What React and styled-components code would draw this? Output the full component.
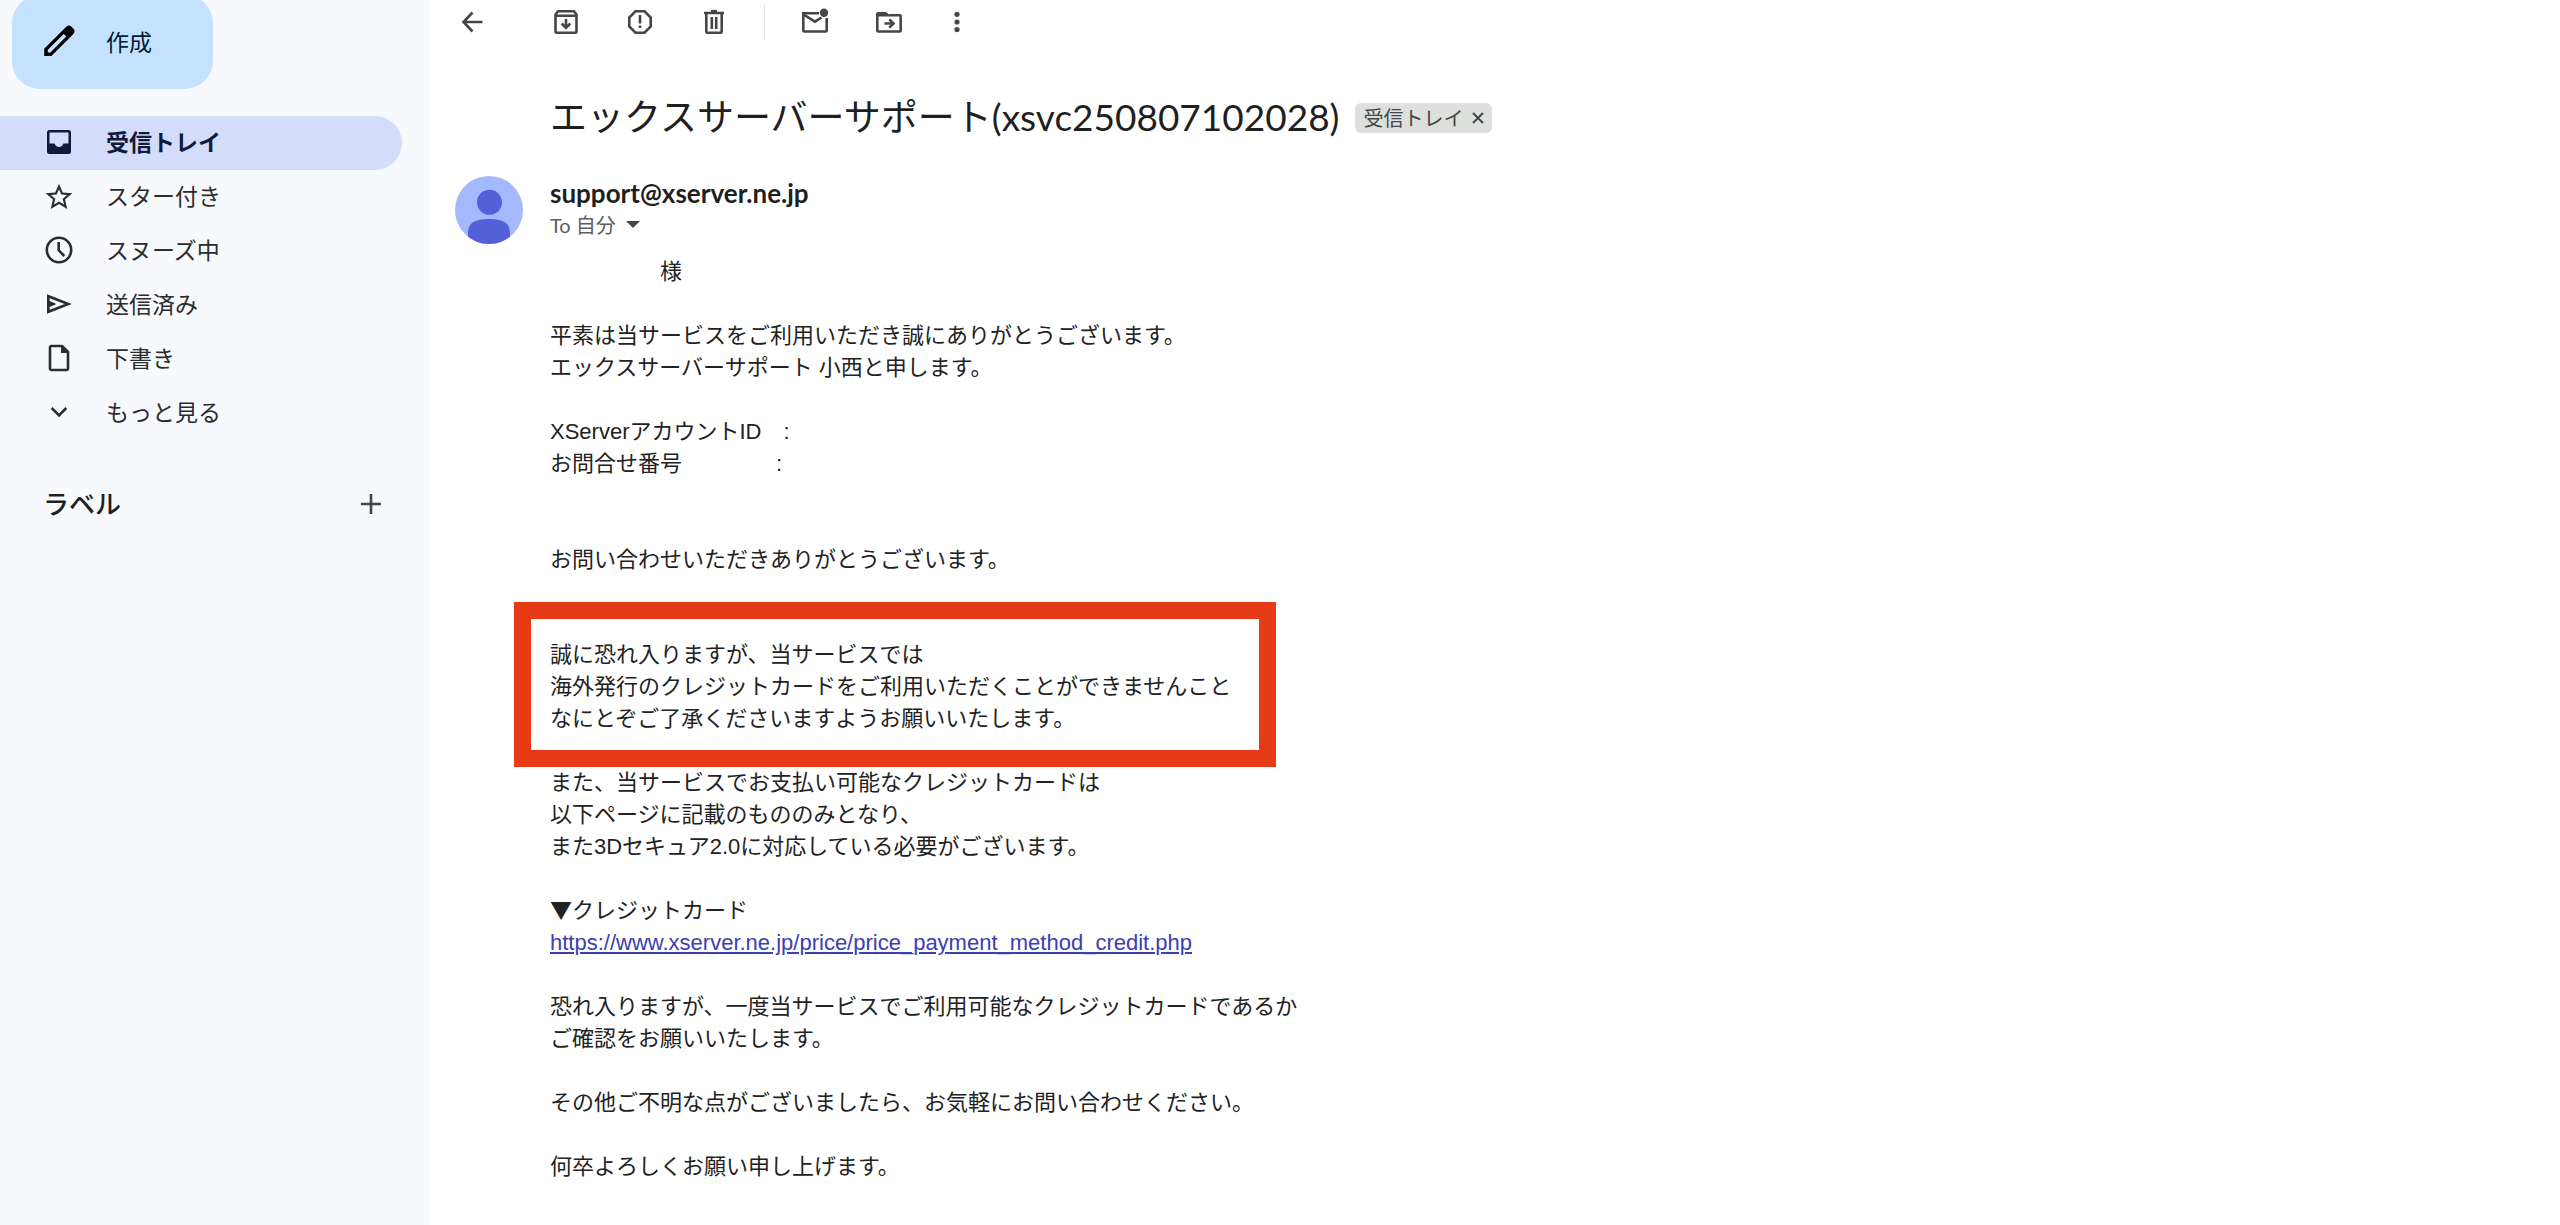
import React from "react";
import styled, { createGlobalStyle } from "styled-components";

const ui = `Lato, "Noto Sans CJK JP", sans-serif`;
const mail = `"Liberation Sans", "Noto Sans CJK JP", sans-serif`;

const GlobalStyle = createGlobalStyle`
  *, *::before, *::after { box-sizing: border-box; }
  body { margin: 0; background: #fff; color: #1f1f1f; font-family: ${ui}; }
  button { border: 0; padding: 0; background: none; color: inherit; font: inherit; cursor: pointer; }
  svg { display: block; flex: none; }
`;

const Layout = styled.div`
  display: flex;
  min-height: 100vh;
`;

const Sidebar = styled.aside`
  flex: none;
  width: 429px;
  background: #f8f9fd;
`;

const Compose = styled.button`
  display: flex;
  align-items: center;
  gap: 31px;
  width: 201px;
  height: 94px;
  margin: -5px 0 27px 12px;
  padding: 0 0 2px 31px;
  border-radius: 28px;
  background: #c4e2ff;
  color: #001d35;
  font-size: 23px;
`;

const NavItem = styled.a`
  display: flex;
  align-items: center;
  gap: 31px;
  width: 402px;
  height: 54px;
  padding: 0 0 2px 43px;
  border-radius: 0 27px 27px 0;
  background: ${(p) => (p.$active ? "#d3dcf9" : "transparent")};
  color: ${(p) => (p.$active ? "#0f1a3d" : "#2b2c2e")};
  font-size: 23px;
  line-height: 32px;
  font-weight: ${(p) => (p.$active ? 700 : 400)};
  text-decoration: none;
`;

const Labels = styled.div`
  display: flex;
  align-items: center;
  justify-content: space-between;
  width: 402px;
  margin-top: 46px;
  padding: 0 15px 0 43px;
`;

const LabelsTitle = styled.h2`
  margin: 0;
  font-size: 26px;
  line-height: 36px;
  font-weight: 500;
`;

const IconButton = styled.button`
  display: flex;
  justify-content: center;
  width: ${(p) => p.$width || 32}px;
  height: 32px;
  color: #444746;
`;

const Main = styled.main`
  flex: 1;
  min-width: 0;
  padding: 6px 26px 24px;
`;

const Toolbar = styled.div`
  display: flex;
  align-items: center;
  gap: 42px;
  height: 32px;
  padding-left: 1px;
`;

const ToolGroup = styled.div`
  display: flex;
  gap: 42px;
  padding-left: ${(p) => p.$indent || 0}px;
`;

const Divider = styled.span`
  width: 1px;
  height: 36px;
  margin: 0 -8px;
  background: #e3e5e8;
`;

const Subject = styled.div`
  display: flex;
  align-items: center;
  gap: 16px;
  margin-top: 55px;
  padding-left: 95px;
`;

const Title = styled.h1`
  margin: 0;
  font-size: 37px;
  line-height: 48px;
  font-weight: 400;
`;

const Chip = styled.span`
  display: flex;
  align-items: center;
  gap: 5px;
  height: 30px;
  margin-top: 2px;
  padding: 0 4px 0 8px;
  border-radius: 6px;
  background: #dde0dd;
  color: #444746;
  font-size: 20px;
  line-height: 30px;
`;

const ChipClose = styled.button`
  display: flex;
  align-items: center;
  justify-content: center;
  width: 20px;
  height: 30px;
`;

const Sender = styled.header`
  display: flex;
  gap: 27px;
  margin-top: 35px;
`;

const SenderText = styled.div`
  padding-top: 1px;
`;

const Address = styled.div`
  font-size: 26px;
  line-height: 32px;
  font-weight: 700;
`;

const Recipient = styled.button`
  display: flex;
  align-items: center;
  gap: 10px;
  color: #5e5e5e;
  font-size: 20px;
  line-height: 32px;
`;

const Body = styled.div`
  margin-top: 12px;
  padding-left: 95px;
  color: #222;
  font-family: ${mail};
  font-size: 22px;
  line-height: 32px;
`;

const Paragraph = styled.p`
  margin: 0 0 ${(p) => (p.$gap ?? 1) * 32}px;
  white-space: pre-line;
`;

const Field = styled.div`
  white-space: pre;
`;

const Bullet = styled.span`
  font-family: "Noto Sans CJK JP", sans-serif;
  line-height: 1;
`;

const Highlight = styled.section`
  width: 762px;
  margin: -6px 0 0 -36px;
  padding: 20px 19px 15px;
  border: 17px solid #e73b17;
`;

const Link = styled.a`
  color: #3b40b0;
`;

const stroke = {
  fill: "none",
  stroke: "currentColor",
  strokeWidth: 2.6,
};

const Icon = ({ size = 32, children }) => (
  <svg width={size} height={size} viewBox="0 0 32 32" {...stroke} aria-hidden="true">
    {children}
  </svg>
);

const PencilIcon = () => (
  <Icon>
    <path
      d="M1.200 31 L1.200 23.800 L22.500 2.500 Q25.500 -.800 28.500 1.700 L30.500 3.700 Q33 6.700 29.700 9.700 L8.400 31 Z M4.800 27.400 L7.400 27.400 L23.300 11.500 L20.700 8.900 L4.800 24.800 Z"
      fill="#000"
      fillRule="evenodd"
      stroke="none"
    />
  </Icon>
);

const InboxIcon = () => (
  <Icon>
    <path
      d="M6.500 4h19A2.500 2.500 0 0 1 28 6.500v19A2.500 2.500 0 0 1 25.500 28h-19A2.500 2.500 0 0 1 4 25.500v-19A2.500 2.500 0 0 1 6.500 4zM6.500 6.500V17.500H11.500Q13 21 16 21Q19 21 20.500 17.500H25.500V6.500z"
      fill="currentColor"
      fillRule="evenodd"
      stroke="none"
    />
  </Icon>
);

const StarIcon = () => (
  <Icon>
    <g transform="translate(0 1) scale(1.333)">
      <path
        d="M22 9.240l-7.190-.620L12 2 9.190 8.630 2 9.240l5.460 4.730L5.820 21 12 17.270 18.180 21l-1.630-7.030L22 9.240zM12 15.400l-3.760 2.270 1-4.280-3.320-2.880 4.380-.380L12 6.100l1.710 4.040 4.380.380-3.320 2.880 1 4.280L12 15.400z"
        fill="currentColor"
        stroke="none"
      />
    </g>
  </Icon>
);

const ClockIcon = () => (
  <Icon>
    <circle cx="16" cy="16" r="12.200" />
    <path d="M15.700 8v8.300l5.600 5.700" />
  </Icon>
);

const SendIcon = () => (
  <Icon>
    <path d="M5.300 8.200v15.600L25.300 16z" />
    <path d="M5 12.300v7.400L13.500 16z" fill="currentColor" stroke="none" />
  </Icon>
);

const DraftIcon = () => (
  <Icon>
    <path d="M19 4H8.500A1.500 1.500 0 0 0 7 5.500v21A1.500 1.500 0 0 0 8.500 28h15a1.500 1.500 0 0 0 1.500-1.500V10z" strokeLinejoin="round" />
    <path d="M18 3.500V11h7.500z" fill="currentColor" stroke="none" />
  </Icon>
);

const ChevronIcon = () => (
  <Icon>
    <path d="M8.700 12l7.300 7.300L23.300 12" />
  </Icon>
);

const PlusIcon = () => (
  <Icon>
    <path d="M16 6v20M6 16h20" />
  </Icon>
);

const BackIcon = () => (
  <Icon>
    <path d="M26.500 16H8M16.500 6.500L7.500 16l9 9.500" />
  </Icon>
);

const ArchiveIcon = () => (
  <Icon>
    <path d="M5.500 8.500L8 5.300h16l2.500 3.200v17a1.200 1.200 0 0 1-1.200 1.200H6.700a1.200 1.200 0 0 1-1.200-1.200zM5 9.800h22" strokeLinejoin="round" />
    <path d="M16 13v8.500M11.700 17.500l4.300 4.300 4.300-4.300" />
  </Icon>
);

const SpamIcon = () => (
  <Icon>
    <path d="M11.500 5.300h9l6.200 6.200v9l-6.200 6.200h-9l-6.200-6.200v-9z" />
    <path d="M16 9v8.500M16 19.500v2.600" />
  </Icon>
);

const TrashIcon = () => (
  <Icon>
    <path d="M6 7h20M8.300 7v18.500a1.200 1.200 0 0 0 1.200 1.200h13a1.200 1.200 0 0 0 1.200-1.200V7M13.800 11v12M18.200 11v12" />
    <path d="M13 5.200h6" />
  </Icon>
);

const UnreadIcon = () => (
  <Icon>
    <path d="M20 7.300H4.300v17.200a1 1 0 0 0 1 1h21.400a1 1 0 0 0 1-1V12" />
    <path d="M4.500 8.500L16 15.700l6.500-4.200" />
    <circle cx="25" cy="6.700" r="4.200" fill="currentColor" stroke="none" />
  </Icon>
);

const MoveIcon = () => (
  <Icon>
    <path d="M4.300 8v16.500a1 1 0 0 0 1 1h21.400a1 1 0 0 0 1-1V10.300a1 1 0 0 0-1-1H16" />
    <path d="M3 10.600V8a2 2 0 0 1 2-2h8l3.500 3v1.600z" fill="currentColor" stroke="none" />
    <path d="M11.500 17.500h8M16.300 13.300l4.200 4.200-4.200 4.200" />
  </Icon>
);

const MoreIcon = () => (
  <Icon>
    <g fill="currentColor" stroke="none">
      <circle cx="16" cy="8.300" r="2.600" />
      <circle cx="16" cy="16" r="2.600" />
      <circle cx="16" cy="23.600" r="2.600" />
    </g>
  </Icon>
);

const Avatar = () => (
  <svg width="68" height="68" viewBox="0 0 68 68" role="img" aria-label="support@xserver.ne.jp">
    <clipPath id="avatar-clip">
      <circle cx="34" cy="34" r="34" />
    </clipPath>
    <g clipPath="url(#avatar-clip)">
      <rect width="68" height="68" fill="#a3b8fd" />
      <circle cx="34.500" cy="26.300" r="12.500" fill="#5460d8" />
      <path d="M13 68V56Q13 43 34 43T55 56V68z" fill="#5460d8" />
    </g>
  </svg>
);

const navItems = [
  { label: "受信トレイ", icon: InboxIcon, active: true },
  { label: "スター付き", icon: StarIcon },
  { label: "スヌーズ中", icon: ClockIcon },
  { label: "送信済み", icon: SendIcon },
  { label: "下書き", icon: DraftIcon },
  { label: "もっと見る", icon: ChevronIcon },
];

const Tool = ({ label, icon: Glyph, width }) => (
  <IconButton aria-label={label} $width={width}>
    <Glyph />
  </IconButton>
);

export default function App() {
  return (
    <>
      <GlobalStyle />
      <Layout>
        <Sidebar>
          <Compose>
            <PencilIcon />
            作成
          </Compose>
          <nav>
            {navItems.map(({ label, icon: Glyph, active }) => (
              <NavItem key={label} href="#" $active={active}>
                <Glyph />
                {label}
              </NavItem>
            ))}
          </nav>
          <Labels>
            <LabelsTitle>ラベル</LabelsTitle>
            <Tool label="新しいラベルを作成" icon={PlusIcon} />
          </Labels>
        </Sidebar>
        <Main>
          <Toolbar>
            <ToolGroup>
              <Tool label="戻る" icon={BackIcon} />
            </ToolGroup>
            <ToolGroup $indent={20}>
              <Tool label="アーカイブ" icon={ArchiveIcon} />
              <Tool label="迷惑メールを報告" icon={SpamIcon} />
              <Tool label="削除" icon={TrashIcon} />
            </ToolGroup>
            <Divider />
            <ToolGroup>
              <Tool label="未読にする" icon={UnreadIcon} />
              <Tool label="移動" icon={MoveIcon} />
              <Tool label="その他" icon={MoreIcon} width={20} />
            </ToolGroup>
          </Toolbar>
          <Subject>
            <Title>エックスサーバーサポート(xsvc250807102028)</Title>
            <Chip>
              受信トレイ
              <ChipClose aria-label="受信トレイから削除">
                <svg width="12" height="12" viewBox="0 0 12 12" {...stroke} strokeWidth="2">
                  <path d="M1 1l10 10M11 1L1 11" />
                </svg>
              </ChipClose>
            </Chip>
          </Subject>
          <Sender>
            <Avatar />
            <SenderText>
              <Address>support@xserver.ne.jp</Address>
              <Recipient>
                To 自分
                <svg width="14" height="8" viewBox="0 0 14 8">
                  <path d="M0 0h14L7 7z" fill="#444746" />
                </svg>
              </Recipient>
            </SenderText>
          </Sender>
          <Body>
            <Field>{"　　　　　様"}</Field>
            <Paragraph $gap={1}> </Paragraph>
            <Paragraph>
              {"平素は当サービスをご利用いただき誠にありがとうございます。\nエックスサーバーサポート 小西と申します。"}
            </Paragraph>
            <Field>{"XServerアカウントID　:"}</Field>
            <Field>{"お問合せ番号　　　　 :"}</Field>
            <Paragraph $gap={2}> </Paragraph>
            <Paragraph>お問い合わせいただきありがとうございます。</Paragraph>
            <Highlight>
              <Paragraph $gap={0}>
                {"誠に恐れ入りますが、当サービスでは\n海外発行のクレジットカードをご利用いただくことができませんこと\nなにとぞご了承くださいますようお願いいたします。"}
              </Paragraph>
            </Highlight>
            <Paragraph>
              {"また、当サービスでお支払い可能なクレジットカードは\n以下ページに記載のもののみとなり、\nまた3Dセキュア2.0に対応している必要がございます。"}
            </Paragraph>
            <Paragraph>
              <Bullet>▼</Bullet>
              {"クレジットカード\n"}
              <Link href="https://www.xserver.ne.jp/price/price_payment_method_credit.php">
                https://www.xserver.ne.jp/price/price_payment_method_credit.php
              </Link>
            </Paragraph>
            <Paragraph>
              {"恐れ入りますが、一度当サービスでご利用可能なクレジットカードであるか\nご確認をお願いいたします。"}
            </Paragraph>
            <Paragraph>その他ご不明な点がございましたら、お気軽にお問い合わせください。</Paragraph>
            <Paragraph $gap={0}>何卒よろしくお願い申し上げます。</Paragraph>
          </Body>
        </Main>
      </Layout>
    </>
  );
}
